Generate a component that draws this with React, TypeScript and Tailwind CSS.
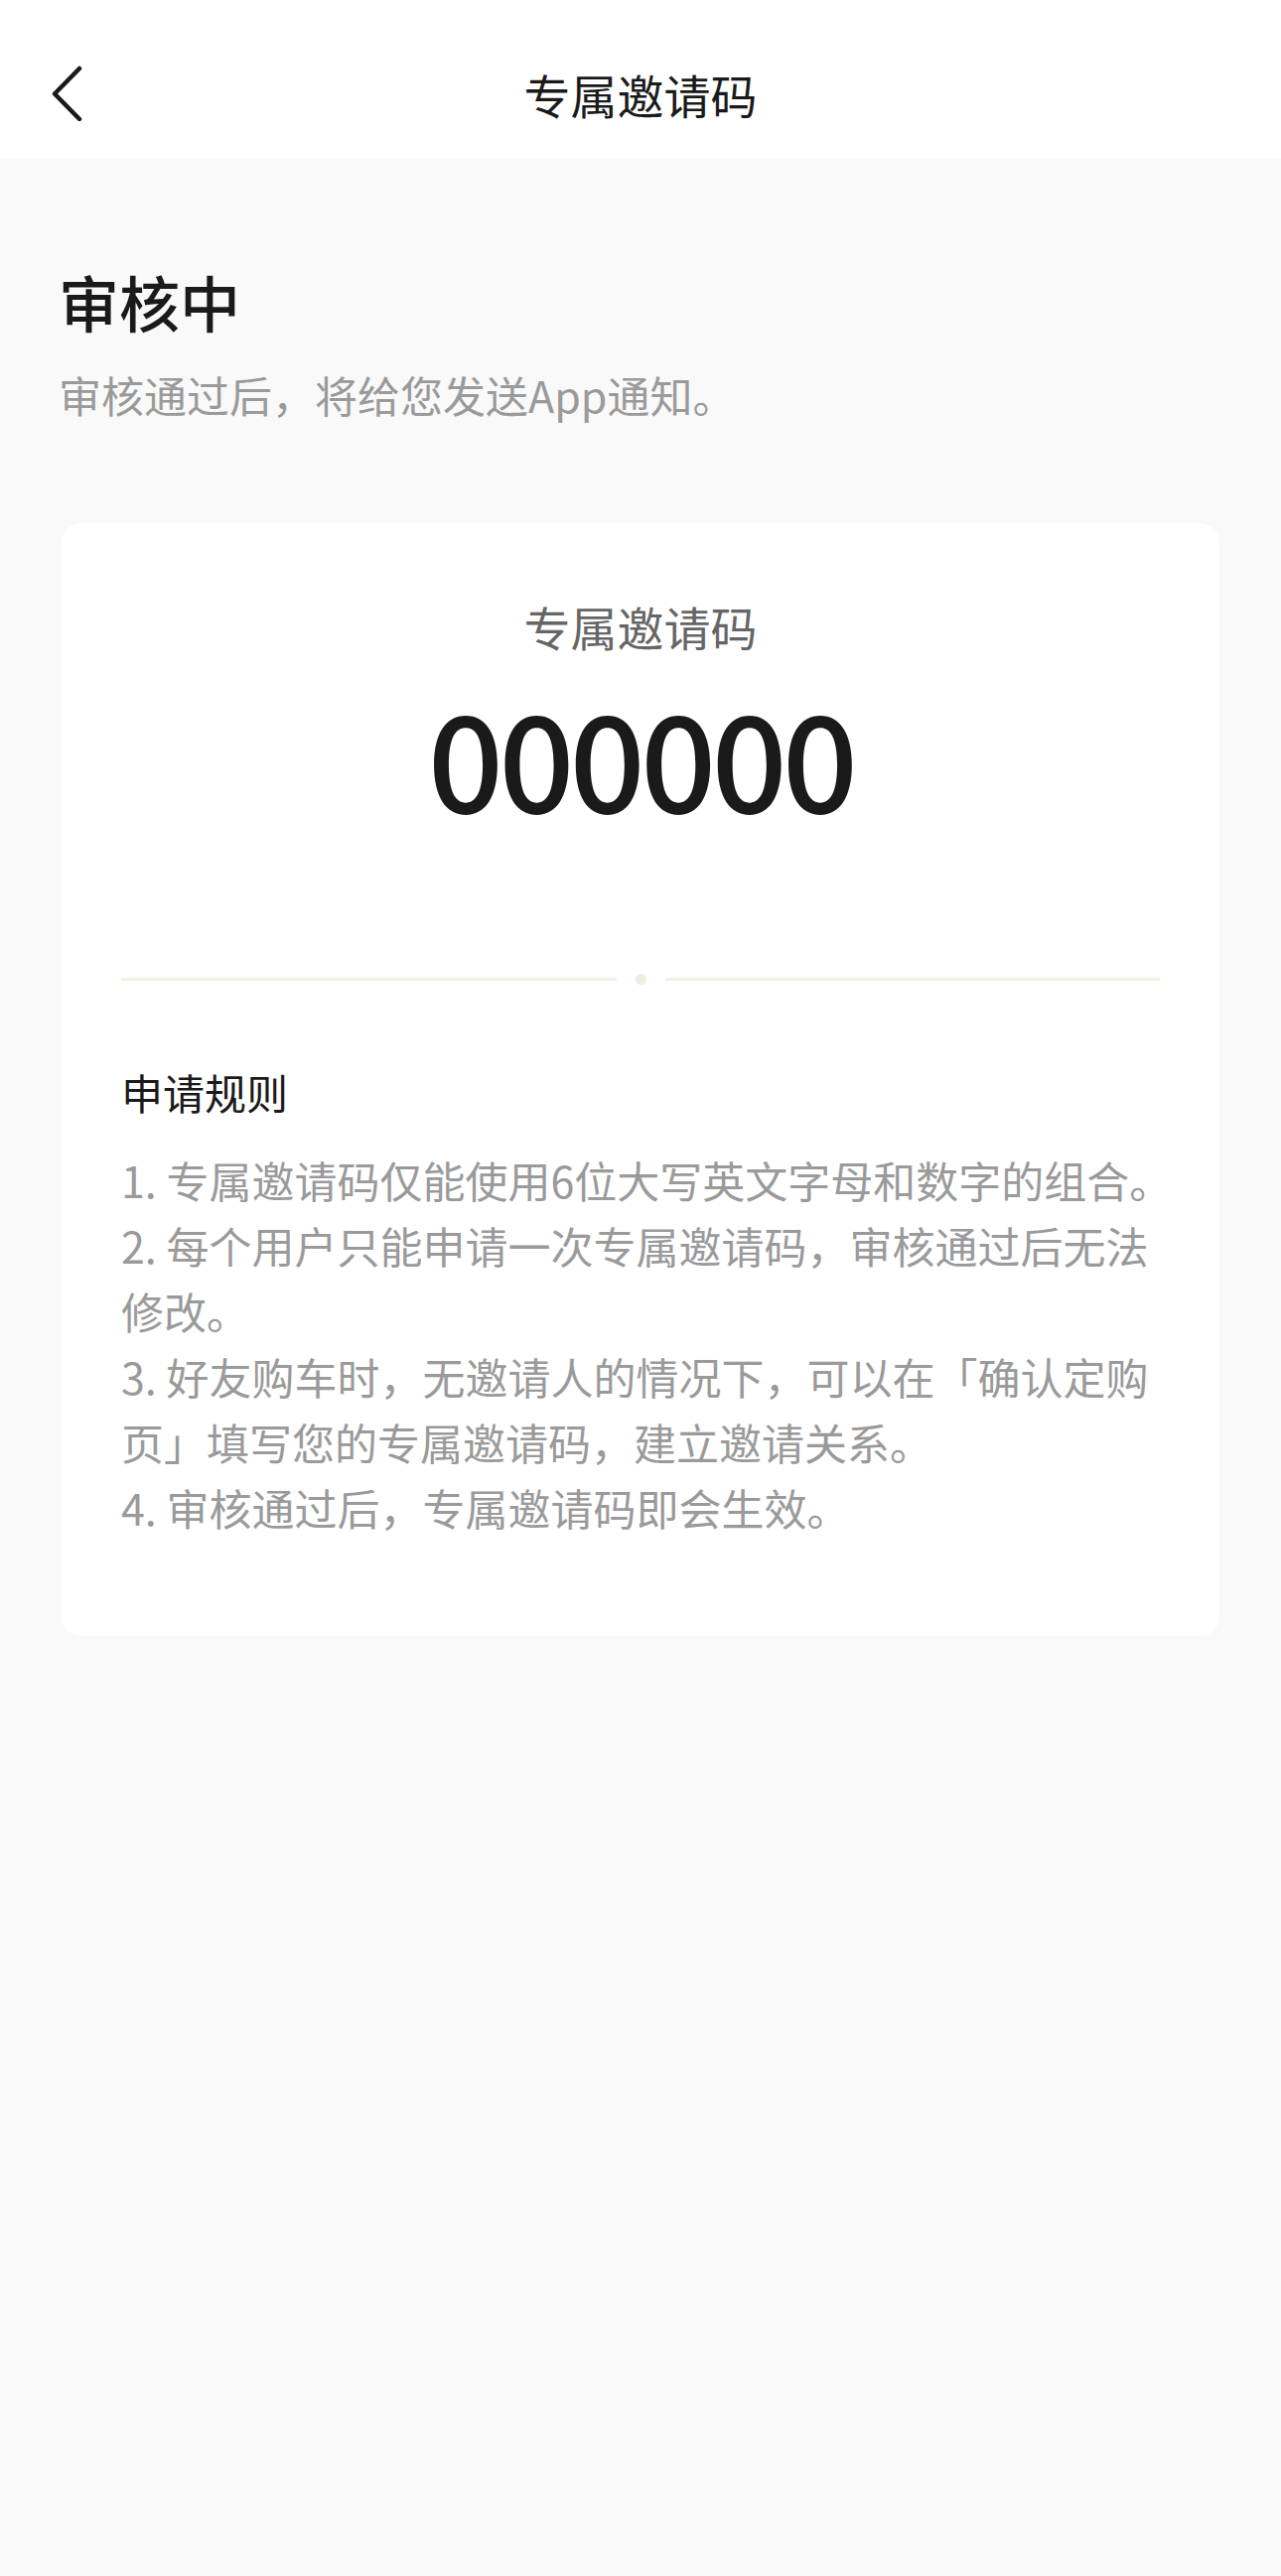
import React from 'react';

const rules: string[][] = [
  ['1. 专属邀请码仅能使用6位大写英文字母和数字的组合。'],
  ['2. 每个用户只能申请一次专属邀请码，审核通过后无法', '修改。'],
  ['3. 好友购车时，无邀请人的情况下，可以在「确认定购', '页」填写您的专属邀请码，建立邀请关系。'],
  ['4. 审核通过后，专属邀请码即会生效。'],
];

export default function App() {
  return (
    <div className="min-h-[2595px] bg-[#f9f9f9] font-['Noto_Sans_CJK_SC','Noto_Sans',sans-serif]">
      {/* Header */}
      <header className="h-[160px] bg-white flex items-center pt-[28px]">
        <div className="w-[200px] pl-[50px] flex items-center">
          <svg width="34" height="56" viewBox="0 0 34 56" fill="none">
            <polyline points="30,3 5,28.5 30,54" stroke="#1a1a1a" strokeWidth="4.5" strokeLinecap="round" strokeLinejoin="round" />
          </svg>
        </div>
        <h1 className="flex-1 text-center text-[47px] leading-none text-[#1a1a1a]">专属邀请码</h1>
        <div className="w-[200px]" />
      </header>

      <main className="px-[62px]">
        <section className="pt-[108px] -ml-[3px]">
          <h2 className="text-[61px] leading-[72px] font-medium text-[#1a1a1a]">审核中</h2>
          <p className="mt-[27px] text-[43px] leading-[60px] text-[#9a9a9a]">审核通过后，将给您发送App通知。</p>
        </section>

        <div className="mt-[100px] bg-white rounded-[20px] px-[60px] pt-[71px] pb-[97px]">
          <div className="text-center text-[47px] leading-[66px] text-[#666666]">专属邀请码</div>
          <div className="mt-[30px] text-center text-[134px] leading-[134px] font-medium text-[#1a1a1a] tracking-[-5px]">000000</div>

          {/* Divider */}
          <div className="mt-[153px] flex items-center gap-[19px]">
            <div className="flex-1 h-[3px] bg-[#f6efe6]" />
            <div className="w-[11px] h-[11px] rounded-full bg-[#f3ebe1]" />
            <div className="flex-1 h-[3px] bg-[#f6efe6]" />
          </div>

          <h3 className="mt-[78px] text-[42px] leading-[59px] text-[#1a1a1a]">申请规则</h3>
          <div className="mt-[26px] text-[43px] leading-[66px] text-[#9a9a9a]">
            {rules.map((lines, i) => (
              <p key={i}>
                {lines.map((line, j) => (
                  <span key={j} className="block whitespace-nowrap">{line}</span>
                ))}
              </p>
            ))}
          </div>
        </div>
      </main>
    </div>
  );
}
